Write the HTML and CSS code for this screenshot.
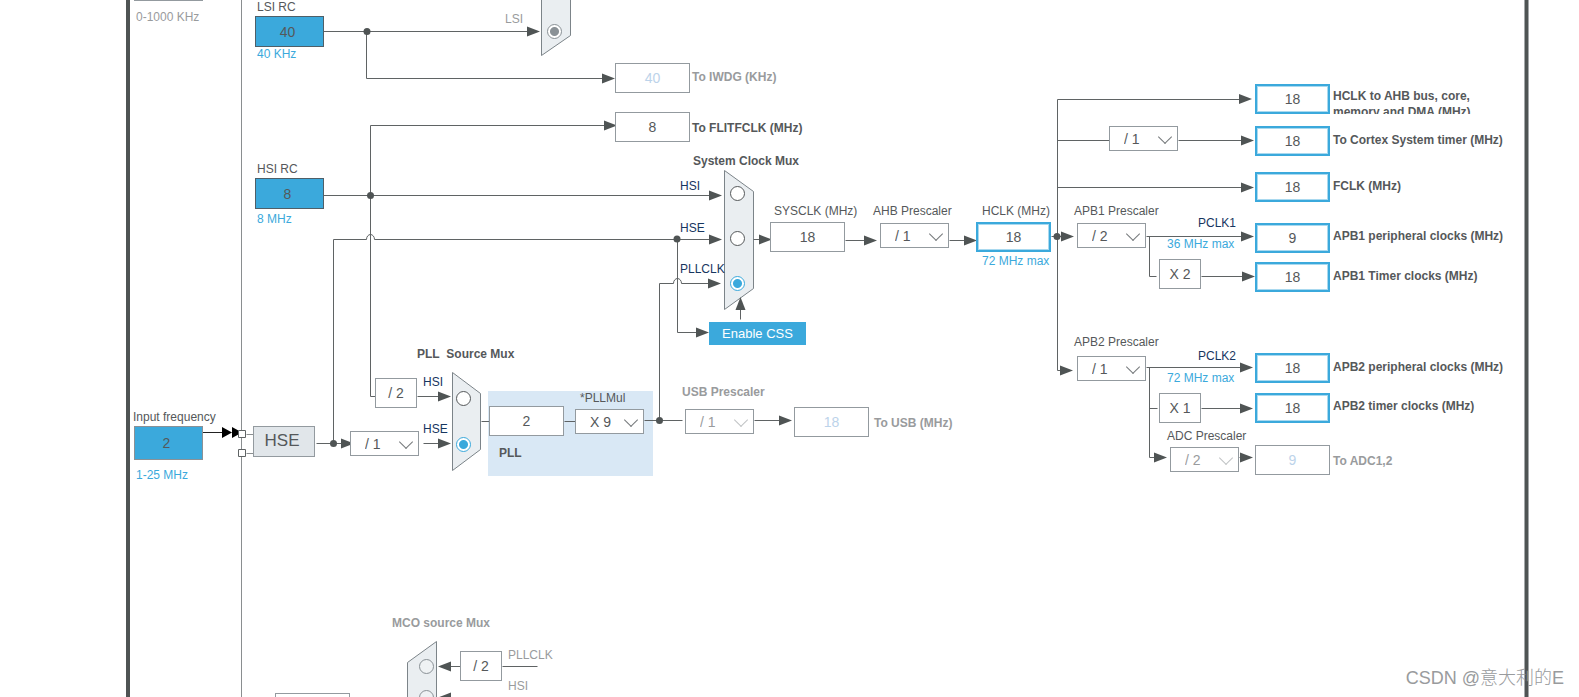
FILE: index.html
```html
<!DOCTYPE html>
<html lang="en">
<head>
<meta charset="utf-8">
<title>Clock Configuration</title>
<link rel="stylesheet" href="styles.css">
</head>
<body>
<main class="stage">
  <div class="rail rail-left"></div>
  <div class="rail rail-right"></div>
  <div class="pll-panel"></div>

  <svg class="wires" aria-hidden="true">
    <defs>
      <path id="arrow" d="M0 0L-13 -5V5Z"/>
    </defs>
    <g class="mux">
      <path d="M541.500 -9V55.500L570.500 35.500V-9"/>
      <path d="M724.500 170.500L753.500 191.500V288.500L724.500 309.500Z"/>
      <path d="M452.500 372.500L480.500 393.500V449.500L452.500 470.500Z"/>
      <path d="M436.500 641.500L407.500 662.500V705H436.500Z"/>
    </g>
    <g class="line" transform="translate(.5 .5)">
      <path class="soft" d="M241 -2V700"/>
      <path d="M323 31H530M366 31V78H604"/>
      <path d="M323 195H712M370 396V125H608M370 396H375"/>
      <path d="M316 443H345M333 443V239H366A4 5 0 0 1 374 239H712"/>
      <path d="M677 239V332H698M659 420V283H673A4 5 0 0 1 681 283H712"/>
      <path d="M753 239H765M845 240H866M949 240H966M1051 236H1065"/>
      <path d="M1063 370H1057V99H1241M1057 140H1109M1178 140H1243M1057 187H1244"/>
      <path d="M1146 236H1244M1149 236V276H1156M1201 276H1244"/>
      <path d="M1146 367H1243M1149 367V457H1156M1149 408H1157M1201 408H1243M1239 457H1243"/>
      <path d="M740 319V306"/>
      <path d="M417 396H440M423 443H440M481 421H489M564 421H575M644 420H682M754 420H780"/>
      <path d="M450 666H460M502 666H537"/>
      <path class="soft" d="M450 697H537M246 434H253M246 453H253"/>
    </g>
    <g class="head">
      <use href="#arrow" x="540" y="31.500"/><use href="#arrow" x="615" y="78.500"/>
      <use href="#arrow" x="617" y="125.500"/><use href="#arrow" x="722" y="195.500"/>
      <use href="#arrow" x="722" y="239.500"/><use href="#arrow" x="721" y="283.500"/>
      <use href="#arrow" x="709" y="332.500"/><use href="#arrow" x="772" y="239.500"/>
      <use href="#arrow" x="877" y="240.500"/><use href="#arrow" x="977" y="240.500"/>
      <use href="#arrow" x="1074" y="236.500"/><use href="#arrow" x="1073" y="370.500"/>
      <use href="#arrow" x="1252" y="99"/><use href="#arrow" x="1254" y="140.500"/>
      <use href="#arrow" x="1254" y="187.500"/><use href="#arrow" x="1254" y="236.500"/>
      <use href="#arrow" x="1255" y="276.500"/><use href="#arrow" x="1253" y="367.500"/>
      <use href="#arrow" x="1253" y="408.500"/><use href="#arrow" x="1167" y="457.500"/>
      <use href="#arrow" x="1253" y="457.500"/><use href="#arrow" x="451" y="396.500"/>
      <use href="#arrow" x="451" y="443.500"/><use href="#arrow" x="354" y="443.500"/>
      <use href="#arrow" x="792" y="420.500"/>
      <use href="#arrow" transform="translate(740.500 297) rotate(-90)"/>
      <use href="#arrow" transform="translate(438 666.500) rotate(180)"/>
      <use href="#arrow" transform="translate(438 697.500) rotate(180)"/>
      <circle cx="367" cy="31.500" r="3.500"/><circle cx="370.500" cy="195.500" r="3.500"/>
      <circle cx="333.500" cy="443.500" r="3.500"/><circle cx="677" cy="239" r="3.500"/>
      <circle cx="659.500" cy="420.500" r="3.500"/><circle cx="1057" cy="236.500" r="3.500"/>
    </g>
    <path class="pin-wire" d="M203 432.500H224"/>
    <path class="pin-head" d="M222 427L232 432.500L222 438ZM232 427L242 432.500L232 438Z"/>
    <path class="pin" d="M238.500 430.500H245.500V437.500H238.500ZM238.500 449.500H245.500V456.500H238.500Z"/>
  </svg>

  <input class="box lse-in off" aria-label="LSE input" disabled>
  <span class="text dim lse-range">0-1000 KHz</span>

  <label class="text lsi-name" for="lsi">LSI RC</label>
  <input class="box source lsi-in" id="lsi" value="40" readonly>
  <span class="text blue lsi-range">40 KHz</span>
  <span class="text dim lsi-tag">LSI</span>
  <input class="radio off rtc-lsi" type="radio" name="rtc" aria-label="LSI" checked disabled>

  <input class="box off iwdg-in" id="iwdg" value="40" disabled>
  <label class="text bold dim iwdg-name" for="iwdg">To IWDG (KHz)</label>
  <input class="box flit-in" id="flit" value="8" readonly>
  <label class="text bold flit-name" for="flit">To FLITFCLK (MHz)</label>

  <label class="text hsi-name" for="hsi">HSI RC</label>
  <input class="box source hsi-in" id="hsi" value="8" readonly>
  <span class="text blue hsi-range">8 MHz</span>

  <label class="text freq-name" for="freq">Input frequency</label>
  <input class="box source freq-in" id="freq" value="2">
  <span class="text blue freq-range">1-25 MHz</span>
  <div class="box hse-block">HSE</div>
  <span class="drop prediv"><select aria-label="HSE divider"><option>/ 1</option></select></span>

  <span class="text bold pllsrc-name">PLL&nbsp; Source Mux</span>
  <div class="box fixed hsi-half">/ 2</div>
  <label class="text navy pllsrc-hsi" for="ps1">HSI</label>
  <label class="text navy pllsrc-hse" for="ps2">HSE</label>
  <input class="radio ps1" id="ps1" type="radio" name="pllsrc">
  <input class="radio ps2" id="ps2" type="radio" name="pllsrc" checked>

  <input class="box pll-in" id="pll" value="2" readonly>
  <label class="text bold pll-name" for="pll">PLL</label>
  <label class="text pllmul-name" for="pllmul">*PLLMul</label>
  <span class="drop pllmul"><select id="pllmul"><option>X 9</option></select></span>

  <label class="text bold dim usb-pre-name" for="usbpre">USB Prescaler</label>
  <span class="drop off usb-pre"><select id="usbpre" disabled><option>/ 1</option></select></span>
  <input class="box off usb-in" id="usb" value="18" disabled>
  <label class="text bold dim usb-name" for="usb">To USB (MHz)</label>

  <span class="text bold sys-mux-name">System Clock Mux</span>
  <label class="text navy sys-hsi" for="sw1">HSI</label>
  <label class="text navy sys-hse" for="sw2">HSE</label>
  <label class="text navy sys-pll" for="sw3">PLLCLK</label>
  <input class="radio sw1" id="sw1" type="radio" name="sys">
  <input class="radio sw2" id="sw2" type="radio" name="sys">
  <input class="radio sw3" id="sw3" type="radio" name="sys" checked>
  <button class="css-button" type="button">Enable CSS</button>

  <label class="text sysclk-name" for="sysclk">SYSCLK (MHz)</label>
  <input class="box sysclk-in" id="sysclk" value="18" readonly>
  <label class="text ahb-name" for="ahb">AHB Prescaler</label>
  <span class="drop ahb"><select id="ahb"><option>/ 1</option></select></span>
  <label class="text hclk-name" for="hclk">HCLK (MHz)</label>
  <input class="box active hclk-in" id="hclk" value="18">
  <span class="text blue hclk-max">72 MHz max</span>

  <span class="drop cortex-pre"><select aria-label="Cortex prescaler"><option>/ 1</option></select></span>
  <label class="text apb1-name" for="apb1">APB1 Prescaler</label>
  <span class="drop apb1"><select id="apb1"><option>/ 2</option></select></span>
  <span class="text navy pclk1">PCLK1</span>
  <span class="text blue pclk1-max">36 MHz max</span>
  <div class="box fixed apb1-mul">X 2</div>
  <label class="text apb2-name" for="apb2">APB2 Prescaler</label>
  <span class="drop apb2"><select id="apb2"><option>/ 1</option></select></span>
  <span class="text navy pclk2">PCLK2</span>
  <span class="text blue pclk2-max">72 MHz max</span>
  <div class="box fixed apb2-mul">X 1</div>
  <label class="text adc-pre-name" for="adcpre">ADC Prescaler</label>
  <span class="drop off adc-pre"><select id="adcpre" disabled><option>/ 2</option></select></span>

  <input class="box active out out-1" id="o1" value="18">
  <label class="text bold name name-1" for="o1">HCLK to AHB bus, core,<br>memory and DMA (MHz)</label>
  <input class="box active out out-2" id="o2" value="18">
  <label class="text bold name name-2" for="o2">To Cortex System timer (MHz)</label>
  <input class="box active out out-3" id="o3" value="18">
  <label class="text bold name name-3" for="o3">FCLK (MHz)</label>
  <input class="box active out out-4" id="o4" value="9">
  <label class="text bold name name-4" for="o4">APB1 peripheral clocks (MHz)</label>
  <input class="box active out out-5" id="o5" value="18">
  <label class="text bold name name-5" for="o5">APB1 Timer clocks (MHz)</label>
  <input class="box active out out-6" id="o6" value="18">
  <label class="text bold name name-6" for="o6">APB2 peripheral clocks (MHz)</label>
  <input class="box active out out-7" id="o7" value="18">
  <label class="text bold name name-7" for="o7">APB2 timer clocks (MHz)</label>
  <input class="box off out out-8" id="o8" value="9" disabled>
  <label class="text bold dim name name-8" for="o8">To ADC1,2</label>

  <span class="text bold dim mco-name">MCO source Mux</span>
  <input class="radio off mco1" id="mco1" type="radio" name="mco" disabled>
  <input class="radio off mco2" id="mco2" type="radio" name="mco" disabled>
  <div class="box fixed mco-half">/ 2</div>
  <label class="text dim mco-pll" for="mco1">PLLCLK</label>
  <label class="text dim mco-hsi" for="mco2">HSI</label>
  <input class="box off mco-in" aria-label="MCO output" disabled>

  <div class="watermark">CSDN @意大利的E</div>
</main>
</body>
</html>
```

FILE: styles.css
```css
* { box-sizing: border-box; }

body {
  margin: 0;
  background: #fff;
  color: #55585a;
  font-family: "Liberation Sans", Arial, sans-serif;
}

/* Free canvas that carries the clock tree */
.stage {
  position: relative;
  height: 100vh;
  overflow: hidden;
}

.rail { position: absolute; top: 0; bottom: 0; }
.rail-left { left: 126px; width: 4px; background: #4f5454; }
.rail-right { left: 1524px; width: 5px; background: #4f5454; border: solid #a4a8aa; border-width: 0 1px; }

.pll-panel { position: absolute; left: 488px; top: 391px; width: 165px; height: 85px; background: #d9e8f5; }

.wires { position: absolute; left: 0; top: 0; width: 100%; height: 100%; }
.line { fill: none; stroke: #5f6364; }
.line .soft { stroke: #8a8e90; }
.head { fill: #4f5454; }
.mux { fill: #eaeef1; stroke: #7c8489; }
.pin-wire { stroke: #222; }
.pin-head { fill: #000; }
.pin { fill: #fff; stroke: #5f6364; }

/* Captions */
.text { position: absolute; font-size: 12px; line-height: 14px; white-space: nowrap; }
.bold { font-weight: bold; }
.dim { color: #999b9d; }
.blue { color: #3ba9dc; }
.navy { color: #17365f; }

/* Value boxes */
.box {
  position: absolute;
  width: 75px;
  height: 30px;
  margin: 0;
  padding: 0;
  border: 1px solid #939a9f;
  background: #fff;
  color: #55585a;
  font-family: inherit;
  font-size: 14px;
  line-height: 28px;
  text-align: center;
}
.box.active { border: 2px solid #3ba9dc; outline: 1px solid #a9d9ef; outline-offset: -3px; }
.box.off { color: #bcd3ea; }
.box.source { width: 69px; height: 31px; padding-right: 4px; background: #3ba9dc; border-color: #4f5f68; }
.box.fixed { width: 42px; }
.box.hse-block { left: 253px; top: 426px; width: 62px; height: 31px; padding-right: 4px; background: #e1e6ea; font-size: 17px; }

/* Drop-downs */
.drop { position: absolute; width: 69px; height: 25px; }
.drop select {
  appearance: none;
  width: 100%;
  height: 100%;
  padding: 0 0 0 14px;
  border: 1px solid #939a9f;
  border-radius: 0;
  background: #fff;
  color: #55585a;
  font-family: inherit;
  font-size: 14px;
  opacity: 1;
}
.drop::after {
  content: "";
  position: absolute;
  right: 8px;
  top: 6px;
  width: 9px;
  height: 9px;
  border: solid #75797b;
  border-width: 0 1px 1px 0;
  transform: rotate(45deg);
  pointer-events: none;
}
.drop.off select { color: #999b9d; }
.drop.off::after { border-color: #c0c3c5; }

/* Mux selectors */
.radio {
  appearance: none;
  position: absolute;
  width: 15px;
  height: 15px;
  margin: 0;
  border: 1px solid #55585a;
  border-radius: 50%;
  background: #fff;
}
.radio:checked { border-color: #3ba9dc; background: radial-gradient(circle, #3ba9dc 4px, #fff 5px); }
.radio.off { border-color: #8a9196; background: #eff2f4; }
.radio.off:checked { background: radial-gradient(circle, #8a9196 4px, #fff 5px); }

.css-button {
  position: absolute;
  left: 709px;
  top: 322px;
  width: 97px;
  height: 23px;
  padding: 0;
  border: 0;
  background: #3ba9dc;
  color: #fff;
  font-family: inherit;
  font-size: 13px;
}

/* Low and high speed sources */
.lse-in { left: 134px; top: -29px; width: 69px; }
.lse-range { left: 136px; top: 10px; }
.lsi-name { left: 257px; top: 0; }
.lsi-in { left: 255px; top: 16px; }
.lsi-range { left: 257px; top: 47px; }
.lsi-tag { left: 505px; top: 12px; }
.rtc-lsi { left: 547px; top: 24px; }
.iwdg-in { left: 615px; top: 63px; }
.iwdg-name { left: 692px; top: 70px; }
.flit-in { left: 615px; top: 112px; }
.flit-name { left: 692px; top: 121px; }
.hsi-name { left: 257px; top: 162px; }
.hsi-in { left: 255px; top: 178px; }
.hsi-range { left: 257px; top: 212px; }
.freq-name { left: 133px; top: 410px; }
.box.freq-in { left: 134px; top: 426px; height: 34px; border-color: #8a9196; }
.freq-range { left: 136px; top: 468px; }
.prediv { left: 350px; top: 431px; }

/* PLL */
.pllsrc-name { left: 417px; top: 347px; }
.hsi-half { left: 375px; top: 378px; }
.pllsrc-hsi { left: 423px; top: 375px; }
.pllsrc-hse { left: 423px; top: 422px; }
.ps1 { left: 456px; top: 391px; }
.ps2 { left: 456px; top: 437px; }
.pll-in { left: 489px; top: 406px; }
.pll-name { left: 499px; top: 446px; }
.pllmul-name { left: 580px; top: 391px; }
.pllmul { left: 575px; top: 409px; }
.usb-pre-name { left: 682px; top: 385px; }
.usb-pre { left: 685px; top: 409px; }
.usb-in { left: 794px; top: 407px; }
.usb-name { left: 874px; top: 416px; }

/* System clock */
.sys-mux-name { left: 693px; top: 154px; }
.sys-hsi { left: 680px; top: 179px; }
.sys-hse { left: 680px; top: 221px; }
.sys-pll { left: 680px; top: 262px; }
.sw1 { left: 730px; top: 186px; }
.sw2 { left: 730px; top: 231px; }
.sw3 { left: 730px; top: 276px; }
.sysclk-name { left: 774px; top: 204px; }
.sysclk-in { left: 770px; top: 222px; }
.ahb-name { left: 873px; top: 204px; }
.ahb { left: 880px; top: 223px; }
.hclk-name { left: 982px; top: 204px; }
.hclk-in { left: 976px; top: 222px; }
.hclk-max { left: 982px; top: 254px; }

/* Bus prescalers */
.cortex-pre { left: 1109px; top: 126px; }
.apb1-name { left: 1074px; top: 204px; }
.apb1 { left: 1077px; top: 223px; }
.pclk1 { left: 1198px; top: 216px; }
.pclk1-max { left: 1167px; top: 237px; }
.apb1-mul { left: 1159px; top: 259px; }
.apb2-name { left: 1074px; top: 335px; }
.apb2 { left: 1077px; top: 356px; }
.pclk2 { left: 1198px; top: 349px; }
.pclk2-max { left: 1167px; top: 371px; }
.apb2-mul { left: 1159px; top: 393px; }
.adc-pre-name { left: 1167px; top: 429px; }
.adc-pre { left: 1170px; top: 447px; }

/* Outputs */
.out { left: 1255px; }
.out-1 { top: 84px; }
.out-2 { top: 126px; }
.out-3 { top: 172px; }
.out-4 { top: 223px; }
.out-5 { top: 262px; }
.out-6 { top: 353px; }
.out-7 { top: 393px; }
.out-8 { top: 445px; }
.name { left: 1333px; }
.name-1 { top: 88px; height: 26px; line-height: 16px; overflow: hidden; }
.name-2 { top: 133px; }
.name-3 { top: 179px; }
.name-4 { top: 229px; }
.name-5 { top: 269px; }
.name-6 { top: 360px; }
.name-7 { top: 399px; }
.name-8 { top: 454px; }

/* MCO */
.mco-name { left: 392px; top: 616px; }
.mco1 { left: 419px; top: 659px; }
.mco2 { left: 419px; top: 690px; }
.mco-half { left: 460px; top: 651px; }
.mco-pll { left: 508px; top: 648px; }
.mco-hsi { left: 508px; top: 679px; }
.mco-in { left: 275px; top: 693px; }

.watermark {
  position: absolute;
  right: 15px;
  bottom: 6px;
  color: #999b9d;
  font-family: "Liberation Sans", "Noto Sans CJK SC", sans-serif;
  font-size: 18px;
  font-weight: 300;
  line-height: 26px;
}
```
